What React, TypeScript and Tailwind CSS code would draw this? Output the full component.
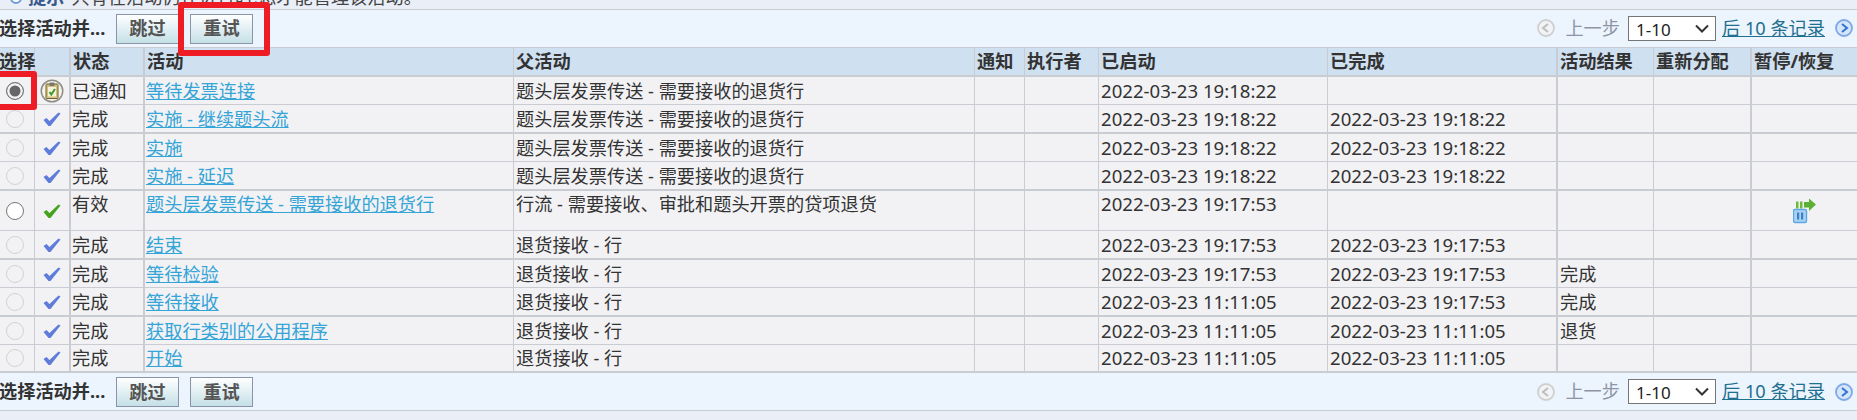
import React from "react";

interface Row {
  status: string;
  done: "clip" | "blue" | "green";
  activity: string;
  parent: string;
  started: string;
  finished?: string;
  result?: string;
  enabled?: boolean;
  selected?: boolean;
  rowClass: string;
  cellBorder: string;
  tall?: boolean;
}

const fontFamily = "font-['Noto_Sans','Noto_Sans_CJK_SC',sans-serif]";
const line = "border-[#c9ccd3]";

const rows: Row[] = [
  { status: "已通知", done: "clip", activity: "等待发票连接", parent: "题头层发票传送 - 需要接收的退货行", started: "2022-03-23 19:18:22", enabled: true, selected: true, rowClass: "h-[28px]", cellBorder: "border-b" },
  { status: "完成", done: "blue", activity: "实施 - 继续题头流", parent: "题头层发票传送 - 需要接收的退货行", started: "2022-03-23 19:18:22", finished: "2022-03-23 19:18:22", rowClass: "h-[29px]", cellBorder: "border-b-2" },
  { status: "完成", done: "blue", activity: "实施", parent: "题头层发票传送 - 需要接收的退货行", started: "2022-03-23 19:18:22", finished: "2022-03-23 19:18:22", rowClass: "h-[28px]", cellBorder: "border-b" },
  { status: "完成", done: "blue", activity: "实施 - 延迟", parent: "题头层发票传送 - 需要接收的退货行", started: "2022-03-23 19:18:22", finished: "2022-03-23 19:18:22", rowClass: "h-[29px]", cellBorder: "border-b-2" },
  { status: "有效", done: "green", activity: "题头层发票传送 - 需要接收的退货行", parent: "行流 - 需要接收、审批和题头开票的贷项退货", started: "2022-03-23 19:17:53", enabled: true, rowClass: "h-[40px]", cellBorder: "border-b", tall: true },
  { status: "完成", done: "blue", activity: "结束", parent: "退货接收 - 行", started: "2022-03-23 19:17:53", finished: "2022-03-23 19:17:53", rowClass: "h-[29px]", cellBorder: "border-b-2" },
  { status: "完成", done: "blue", activity: "等待检验", parent: "退货接收 - 行", started: "2022-03-23 19:17:53", finished: "2022-03-23 19:17:53", result: "完成", rowClass: "h-[28px]", cellBorder: "border-b" },
  { status: "完成", done: "blue", activity: "等待接收", parent: "退货接收 - 行", started: "2022-03-23 11:11:05", finished: "2022-03-23 19:17:53", result: "完成", rowClass: "h-[29px]", cellBorder: "border-b-2" },
  { status: "完成", done: "blue", activity: "获取行类别的公用程序", parent: "退货接收 - 行", started: "2022-03-23 11:11:05", finished: "2022-03-23 11:11:05", result: "退货", rowClass: "h-[28px]", cellBorder: "border-b" },
  { status: "完成", done: "blue", activity: "开始", parent: "退货接收 - 行", started: "2022-03-23 11:11:05", finished: "2022-03-23 11:11:05", rowClass: "h-[28px]", cellBorder: "border-b-2" },
];

const CheckIcon = ({ color }: { color: string }) => (
  <svg width="18" height="16" viewBox="0 0 18 16" className="mx-auto block">
    <path d="M0.5 9 L3.5 7 L6.5 10 L15.5 1.5 L17.5 2.5 L7.5 15 L5.5 15 Z" fill={color} />
  </svg>
);

const ClipboardIcon = () => (
  <svg width="24" height="24" viewBox="0 0 24 24" className="mx-auto block">
    <circle cx="12" cy="12" r="11.5" fill="#8f8d88" />
    <circle cx="12" cy="12" r="10" fill="#f6f4ea" />
    <rect x="6" y="5" width="12" height="14.5" rx="1" fill="#d4c07c" stroke="#6f6234" strokeWidth="1" />
    <rect x="8" y="8" width="8" height="9.5" fill="#f7f4de" />
    <rect x="9.5" y="3.5" width="5" height="3.5" rx="1" fill="#77776f" />
    <path d="M9.5 13 L11.3 15.5 L15 10" fill="none" stroke="#3d9a2a" strokeWidth="2" />
  </svg>
);

const PauseResumeIcon = () => (
  <svg width="24" height="26" viewBox="0 0 24 26" className="block">
    <rect x="3" y="3.5" width="2.5" height="7" fill="#6cbb3c" />
    <rect x="7" y="3.5" width="2.5" height="7" fill="#6cbb3c" />
    <path d="M11 4 L16 4 L16 0.5 L23 6.5 L16 13 L16 9.5 L11 9.5 Z" fill="#5cb035" />
    <rect x="0.5" y="11.5" width="13" height="13" rx="1.5" fill="#a9d3f5" stroke="#5fa6e6" strokeWidth="1.4" />
    <rect x="4" y="14.5" width="2.2" height="7" fill="#3f7fc4" />
    <rect x="8" y="14.5" width="2.2" height="7" fill="#3f7fc4" />
  </svg>
);

const NavIcon = ({ next }: { next?: boolean }) => (
  <svg width="18" height="18" viewBox="0 0 18 18" className="block">
    <circle cx="9" cy="9" r="8" fill={next ? "#d6e6fa" : "#f1f3f6"} stroke={next ? "#7fa8e6" : "#cfcfcf"} strokeWidth="1.8" />
    <path
      d={next ? "M7 5 L12 9 L7 13" : "M11 5 L6 9 L11 13"}
      fill="none"
      stroke={next ? "#2f74d0" : "#bdbdbd"}
      strokeWidth="2"
    />
  </svg>
);

const Radio = ({ enabled, selected }: { enabled?: boolean; selected?: boolean }) => (
  <input
    type="radio"
    readOnly
    disabled={!enabled}
    checked={!!selected}
    className={`ml-[4px] block h-[18px] w-[18px] appearance-none rounded-full border-[1.5px] ${
      selected
        ? "border-[#777] bg-[#666] shadow-[inset_0_0_0_2.5px_#f2f2f5]"
        : enabled
        ? "border-[#767676] bg-white"
        : "border-[#d2d2d2] bg-[#f2f2f5]"
    }`}
  />
);

const Button = ({ label }: { label: string }) => (
  <button className="h-[30px] w-[63px] border border-[#8a93a8] bg-gradient-to-b from-white to-[#c4e0e7] text-[18.2px] leading-none font-bold text-[#555]">
    {label}
  </button>
);

const Toolbar = () => (
  <div className="flex h-[37px] items-center bg-[#ecf4fe]">
    <span className="-ml-[1px] w-[117px] text-[18.2px] font-bold whitespace-nowrap text-[#333]">选择活动并...</span>
    <div className="flex gap-[11px]">
      <Button label="跳过" />
      <Button label="重试" />
    </div>
    <div className="ml-auto flex items-center pr-[4px]">
      <NavIcon />
      <span className="ml-[10px] text-[18.2px] text-[#8c94a5]">上一步</span>
      <div className="relative ml-[8px]">
        <select className="block h-[25px] w-[88px] appearance-none border border-[#767676] bg-white pl-[7px] text-[17px] text-[#222]">
          <option>1-10</option>
        </select>
        <svg width="14" height="9" viewBox="0 0 14 9" className="absolute top-[8px] right-[7px]">
          <path d="M1 1.5 L7 7.5 L13 1.5" fill="none" stroke="#333" strokeWidth="2" />
        </svg>
      </div>
      <a className="ml-[6px] text-[18.2px] whitespace-nowrap text-[#1f6f8f] underline">后 10 条记录</a>
      <span className="ml-[10px]">
        <NavIcon next />
      </span>
    </div>
  </div>
);

const App = () => {
  const thBase = `border-t border-b-2 border-r ${line} bg-[#cfe0f1] px-[2px] text-left text-[18.2px] font-bold whitespace-nowrap text-[#333]`;

  return (
    <div className={`relative h-[420px] w-[1857px] overflow-hidden bg-[#e9eef7] ${fontFamily}`}>
      <div className={`h-[10px] overflow-hidden border-b ${line}`}>
        <div className="-mt-[14px] flex h-[24px] items-center pl-[10px] text-[18.2px] text-[#444]">
          <span className="h-[12px] w-[12px] rounded-full border-2 border-[#6f9fd8] bg-white" />
          <span className="ml-[6px] font-bold text-[#3a5a8c]">提示</span>
          <span className="ml-[7px]">只有在活动仍在进行时,您才能管理该活动。</span>
        </div>
      </div>

      <Toolbar />

      <table className="w-[1857px] table-fixed border-separate border-spacing-0">
        <colgroup>
          <col className="w-[35px]" />
          <col className="w-[36px]" />
          <col className="w-[74px]" />
          <col className="w-[369px]" />
          <col className="w-[461px]" />
          <col className="w-[50px]" />
          <col className="w-[74px]" />
          <col className="w-[229px]" />
          <col className="w-[230px]" />
          <col className="w-[96px]" />
          <col className="w-[98px]" />
          <col className="w-[105px]" />
        </colgroup>
        <thead>
          <tr className="h-[30px]">
            <th className={thBase}>
              <span className="-ml-[3px] block">选择</span>
            </th>
            <th className={`${thBase} border-r-2`}></th>
            <th className={`${thBase} border-r-2`}>状态</th>
            <th className={thBase}>活动</th>
            <th className={thBase}>父活动</th>
            <th className={`${thBase} text-center`}>通知</th>
            <th className={thBase}>执行者</th>
            <th className={thBase}>已启动</th>
            <th className={`${thBase} border-r-2`}>已完成</th>
            <th className={thBase}>活动结果</th>
            <th className={`${thBase} border-r-2 text-center`}>重新分配</th>
            <th className={`${thBase} border-r-0 text-center`}>暂停/恢复</th>
          </tr>
        </thead>
        <tbody>
          {rows.map((row) => {
            const base = `${row.cellBorder} ${line} bg-[#f2f2f5] px-[2px] whitespace-nowrap text-[#333]`;
            const valign = row.tall ? "align-top" : "align-middle";
            const text = `${base} ${valign} text-[18.2px] leading-[26px]`;
            const date = `${base} ${valign} text-[18.6px] leading-[26px]`;
            return (
              <tr key={row.activity} className={row.rowClass}>
                <td className={`${base} border-r align-middle`}>
                  <Radio enabled={row.enabled} selected={row.selected} />
                </td>
                <td className={`${base} border-r-2 align-middle`}>
                  {row.done === "clip" && <ClipboardIcon />}
                  {row.done === "blue" && <CheckIcon color="#5f7cdb" />}
                  {row.done === "green" && <CheckIcon color="#46a31e" />}
                </td>
                <td className={`${text} border-r-2`}>
                  <span className="-ml-[1px]">{row.status}</span>
                </td>
                <td className={`${text} border-r`}>
                  <a className="-ml-[1px] text-[#35a4d6] underline">{row.activity}</a>
                </td>
                <td className={`${text} border-r`}>{row.parent}</td>
                <td className={`${text} border-r`}></td>
                <td className={`${text} border-r`}></td>
                <td className={`${date} border-r`}>{row.started}</td>
                <td className={`${date} border-r-2`}>{row.finished}</td>
                <td className={`${text} border-r`}>{row.result}</td>
                <td className={`${text} border-r-2`}></td>
                <td className={`${base} align-middle`}>
                  {row.tall && (
                    <div className="flex justify-center">
                      <PauseResumeIcon />
                    </div>
                  )}
                </td>
              </tr>
            );
          })}
        </tbody>
      </table>

      <Toolbar />
      <div className={`border-t ${line}`} />

      {/* red highlight boxes drawn over the screenshot */}
      <div className="absolute top-[2px] left-[178px] h-[54px] w-[92px] rounded-[3px] border-[6px] border-[#ee1c25]" />
      <div className="absolute top-[71px] -left-[6px] h-[39px] w-[43px] rounded-[3px] border-[6px] border-[#ee1c25]" />
    </div>
  );
};

export default App;
